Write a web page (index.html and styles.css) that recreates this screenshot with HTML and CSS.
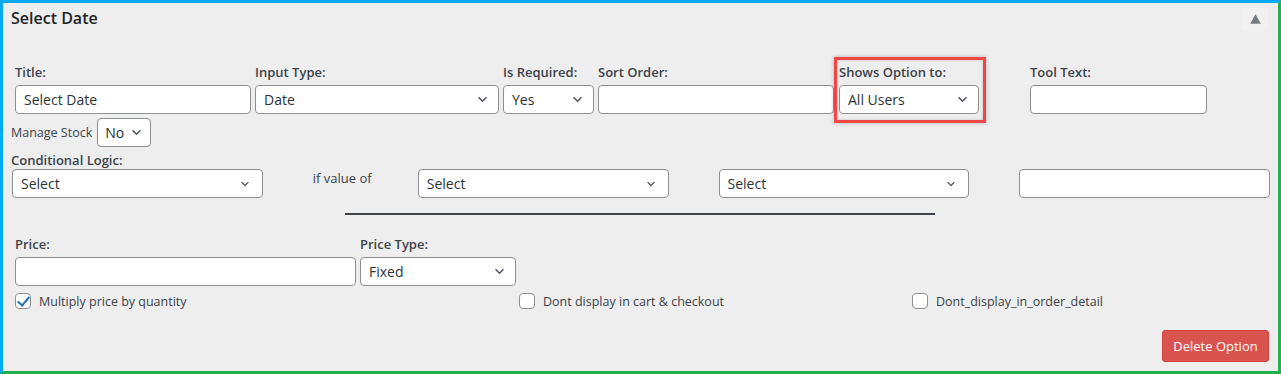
FILE: index.html
```html
<!DOCTYPE html>
<html lang="en">
<head>
  <meta charset="UTF-8">
  <meta name="viewport" content="width=device-width, initial-scale=1.0">
  <title>Select Date</title>
  <link rel="stylesheet" href="styles.css">
</head>
<body>
  <div class="panel">
    <div class="panel-head">
      <h2>Select Date</h2>
      <button class="toggle" aria-label="Collapse">
        <svg width="11" height="10" viewBox="0 0 11 10"><path d="M5.5 0.3L10.8 9.8H0.2z" fill="#787c82"/></svg>
      </button>
    </div>

    <div class="row row-main">
      <div class="field w-title">
        <label>Title:</label>
        <input type="text" value="Select Date">
      </div>
      <div class="field w-type">
        <label>Input Type:</label>
        <select><option>Date</option></select>
      </div>
      <div class="field w-req">
        <label>Is Required:</label>
        <select><option>Yes</option></select>
      </div>
      <div class="field w-sort">
        <label>Sort Order:</label>
        <input type="text">
      </div>
      <div class="field w-shows highlight">
        <label>Shows Option to:</label>
        <select><option>All Users</option></select>
      </div>
      <div class="field w-tool">
        <label>Tool Text:</label>
        <input type="text">
      </div>
    </div>

    <div class="stock">
      <span>Manage Stock</span>
      <select class="small"><option>No</option></select>
    </div>

    <div class="cond">
      <label>Conditional Logic:</label>
      <div class="cond-row">
        <select><option>Select</option></select>
        <span class="if-text">if value of</span>
        <select><option>Select</option></select>
        <select><option>Select</option></select>
        <input type="text">
      </div>
      <hr class="divider">
    </div>

    <div class="row row-price">
      <div class="field w-price">
        <label>Price:</label>
        <input type="text">
      </div>
      <div class="field w-ptype">
        <label>Price Type:</label>
        <select><option>Fixed</option></select>
      </div>
    </div>

    <div class="checks">
      <label class="check c1"><input type="checkbox" checked> Multiply price by quantity</label>
      <label class="check c2"><input type="checkbox"> Dont display in cart &amp; checkout</label>
      <label class="check c3"><input type="checkbox"> Dont_display_in_order_detail</label>
    </div>

    <div class="actions">
      <button class="btn-delete">Delete Option</button>
    </div>
  </div>
</body>
</html>
```

FILE: styles.css
```css
* {
  box-sizing: border-box;
}
body {
  margin: 0;
  font-family: "Open Sans", "Noto Sans", sans-serif;
  color: #3c434a;
  font-size: 13px;
}
.panel {
  height: 374px;
  background: #eeeeee;
  border-style: solid;
  border-width: 3px;
  border-color: #03a9f4 #22b04b #22b04b #03a9f4;
  padding: 0 8px;
}
.panel-head {
  display: flex;
  justify-content: space-between;
  align-items: flex-start;
  height: 50px;
}
.panel-head h2 {
  margin: 0;
  padding-top: 4px;
  font-size: 16px;
  font-weight: 600;
  color: #1d2327;
}
.toggle {
  display: flex;
  align-items: center;
  justify-content: center;
  margin-top: 5px;
  margin-right: 2px;
  width: 26px;
  height: 22px;
  border: none;
  background: #f1f1f1;
  padding: 0;
}

input[type="text"],
select {
  height: 29px;
  border: 1px solid #8c8f94;
  border-radius: 4px;
  background-color: #fff;
  font-family: inherit;
  font-size: 14px;
  color: #2c3338;
  padding: 0 8px;
  margin: 0;
}
select {
  appearance: none;
  -webkit-appearance: none;
  padding-right: 28px;
  background-image: url("data:image/svg+xml,%3Csvg xmlns='http://www.w3.org/2000/svg' width='12' height='8' viewBox='0 0 12 8'%3E%3Cpath d='M1.5 1.5l4.5 4.5 4.5-4.5' fill='none' stroke='%2350575e' stroke-width='1.8'/%3E%3C/svg%3E");
  background-repeat: no-repeat;
  background-position: right 10px center;
  background-size: 11px 7px;
}

.row {
  display: flex;
  gap: 4px;
  padding-left: 4px;
}
.field {
  display: flex;
  flex-direction: column;
}
.field label,
.cond label {
  font-weight: 600;
  line-height: 18px;
  margin-bottom: 4px;
  color: #3c434a;
}
.field input,
.field select {
  width: 100%;
}
.w-title { width: 236px; }
.w-type { width: 244px; }
.w-req { width: 91px; }
.w-sort { width: 236px; margin-right: 1px; }
.w-shows { width: 140px; }
.w-tool { width: 177px; margin-left: 47px; }
.w-price { width: 341px; }
.w-ptype { width: 156px; }

.highlight {
  position: relative;
}
.highlight::after {
  content: "";
  position: absolute;
  top: -6px;
  left: -5px;
  right: -7px;
  bottom: -9px;
  border: 3px solid #ef4646;
  box-shadow: 0 0 4px rgba(0, 0, 0, 0.25), inset 0 0 3px rgba(0, 0, 0, 0.2);
  pointer-events: none;
}

.row-main {
  margin-top: 10px;
}
.stock {
  display: flex;
  align-items: center;
  gap: 5px;
  margin-top: 4px;
}
.stock span {
  font-size: 12.5px;
}
.stock select.small {
  width: 54px;
  padding-left: 7px;
  padding-right: 20px;
  background-position: right 8px center;
}

.cond {
  margin-top: 4px;
}
.cond label {
  display: block;
  margin-bottom: 0;
}
.cond-row {
  display: flex;
  gap: 50px;
  padding-left: 1px;
}
.cond-row select,
.cond-row input {
  width: 251px;
}
.cond-row select {
  background-size: 10px 6px;
  background-position: right 12px center;
}
.if-text {
  width: 55px;
  line-height: 18px;
  white-space: nowrap;
}
.divider {
  width: 590px;
  margin: 15px 0 0 334px;
  border: none;
  border-top: 2px solid #3c434a;
}

.row-price {
  margin-top: 20px;
}

.checks {
  height: 28px;
  display: flex;
  padding-left: 4px;
  margin-top: 6px;
}
.check {
  display: flex;
  align-items: center;
  gap: 8px;
  height: 18px;
  font-size: 12.5px;
}
.c1 { width: 504px; }
.c2 { width: 393px; }
.check input {
  appearance: none;
  -webkit-appearance: none;
  width: 16px;
  height: 16px;
  margin: 0;
  border: 1px solid #8c8f94;
  border-radius: 4px;
  background: #fff;
  position: relative;
}
.check input:checked::before {
  content: "";
  position: absolute;
  left: 4px;
  top: 0px;
  width: 5px;
  height: 10px;
  border: solid #2271b1;
  border-width: 0 2.5px 2.5px 0;
  transform: rotate(40deg);
}

.actions {
  display: flex;
  justify-content: flex-end;
  margin-top: 10px;
  padding-right: 1px;
}
.btn-delete {
  width: 107px;
  height: 32px;
  background: #d9534f;
  border: 1px solid #d43f3a;
  border-radius: 3px;
  color: #fff;
  font-family: inherit;
  font-size: 13px;
  padding: 0;
}
```
